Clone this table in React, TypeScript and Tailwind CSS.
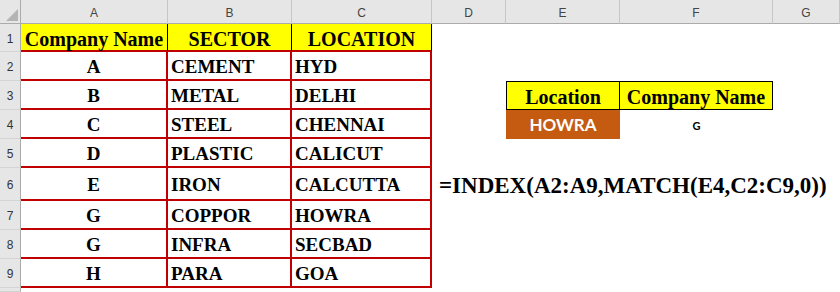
import React from "react";

const serif = "font-['Liberation_Serif',serif] font-bold text-black";

const data = [
  { a: "A", b: "CEMENT", c: "HYD" },
  { a: "B", b: "METAL", c: "DELHI" },
  { a: "C", b: "STEEL", c: "CHENNAI" },
  { a: "D", b: "PLASTIC", c: "CALICUT" },
  { a: "E", b: "IRON", c: "CALCUTTA" },
  { a: "G", b: "COPPOR", c: "HOWRA" },
  { a: "G", b: "INFRA", c: "SECBAD" },
  { a: "H", b: "PARA", c: "GOA" },
];

const letters = ["A", "B", "C", "D", "E", "F", "G"];

function RowHead({ n }: { n?: number }) {
  return (
    <div className="flex items-center justify-center pt-[2px] bg-[#e6e6e6] border-r border-r-[#ababab] border-b border-b-[#d4d4d4] text-[12px] text-[#333] font-['Liberation_Sans',sans-serif]">
      {n}
    </div>
  );
}

export default function App() {
  return (
    <div className="w-[840px] h-[292px] overflow-hidden bg-white grid grid-cols-[21px_147px_124px_140px_74px_114px_153px_1fr] grid-rows-[24px_28px_29px_29px_29px_29px_33px_29px_29px_29px_1fr]">
      {/* corner */}
      <div className="relative bg-[#e6e6e6] border-r border-r-[#ababab] border-b border-b-[#ababab]">
        <div className="absolute right-[2px] bottom-[2px] w-0 h-0 border-l-[12px] border-l-transparent border-b-[12px] border-b-[#b4b4b4]" />
      </div>
      {letters.map((l) => (
        <div
          key={l}
          className="flex items-center justify-center pt-[2px] bg-[#e6e6e6] border-r border-r-[#c6c6c6] border-b border-b-[#ababab] text-[12px] text-[#444] font-['Liberation_Sans',sans-serif]"
        >
          {l}
        </div>
      ))}

      {/* row 1 */}
      <RowHead n={1} />
      <div className={`flex items-center justify-center pt-[3px] bg-[#ffff00] border-r border-r-black border-b-2 border-b-[#c00000] text-[20px] ${serif}`}>
        Company Name
      </div>
      <div className={`flex items-center justify-center pt-[3px] bg-[#ffff00] border-r border-r-black border-b-2 border-b-[#c00000] text-[20px] ${serif}`}>
        SECTOR
      </div>
      <div className={`flex items-center justify-center pt-[3px] bg-[#ffff00] border-r border-r-black border-b-2 border-b-[#c00000] text-[20px] ${serif}`}>
        LOCATION
      </div>
      <div className="col-span-4" />

      {data.map((row, i) => {
        const n = i + 2;
        return (
          <React.Fragment key={n}>
            <RowHead n={n} />
            <div className={`flex items-center justify-center pt-[4px] border-r-2 border-r-[#c00000] border-b-2 border-b-[#c00000] text-[19px] ${serif}`}>
              {row.a}
            </div>
            <div className={`flex items-center pl-[3px] pt-[4px] border-r-2 border-r-[#c00000] border-b-2 border-b-[#c00000] text-[19px] ${serif}`}>
              {row.b}
            </div>
            <div className={`flex items-center pl-[3px] pt-[4px] border-r-2 border-r-[#c00000] border-b-2 border-b-[#c00000] text-[19px] ${serif}`}>
              {row.c}
            </div>

            {n === 3 && (
              <>
                <div />
                <div className={`flex items-center justify-center pt-[3px] bg-[#ffff00] border border-black text-[20px] ${serif}`}>
                  Location
                </div>
                <div className={`flex items-center justify-center pt-[3px] bg-[#ffff00] border-y border-r border-black text-[20px] ${serif}`}>
                  Company Name
                </div>
                <div />
              </>
            )}
            {n === 4 && (
              <>
                <div />
                <div className="flex items-center justify-center pt-[1px] bg-[#c55a11] text-white text-[17px] font-bold font-['Lato',sans-serif]">
                  HOWRA
                </div>
                <div className="flex items-center justify-center pt-[3px] text-black text-[11px] font-bold font-['Lato',sans-serif]">
                  G
                </div>
                <div />
              </>
            )}
            {n === 6 && (
              <div className={`col-span-4 flex items-center pl-[7px] pt-[4px] whitespace-nowrap text-[23px] ${serif}`}>
                =INDEX(A2:A9,MATCH(E4,C2:C9,0))
              </div>
            )}
            {n !== 3 && n !== 4 && n !== 6 && <div className="col-span-4" />}
          </React.Fragment>
        );
      })}

      {/* row 10, cut off at the bottom edge */}
      <RowHead />
      <div className="col-span-7" />
    </div>
  );
}
